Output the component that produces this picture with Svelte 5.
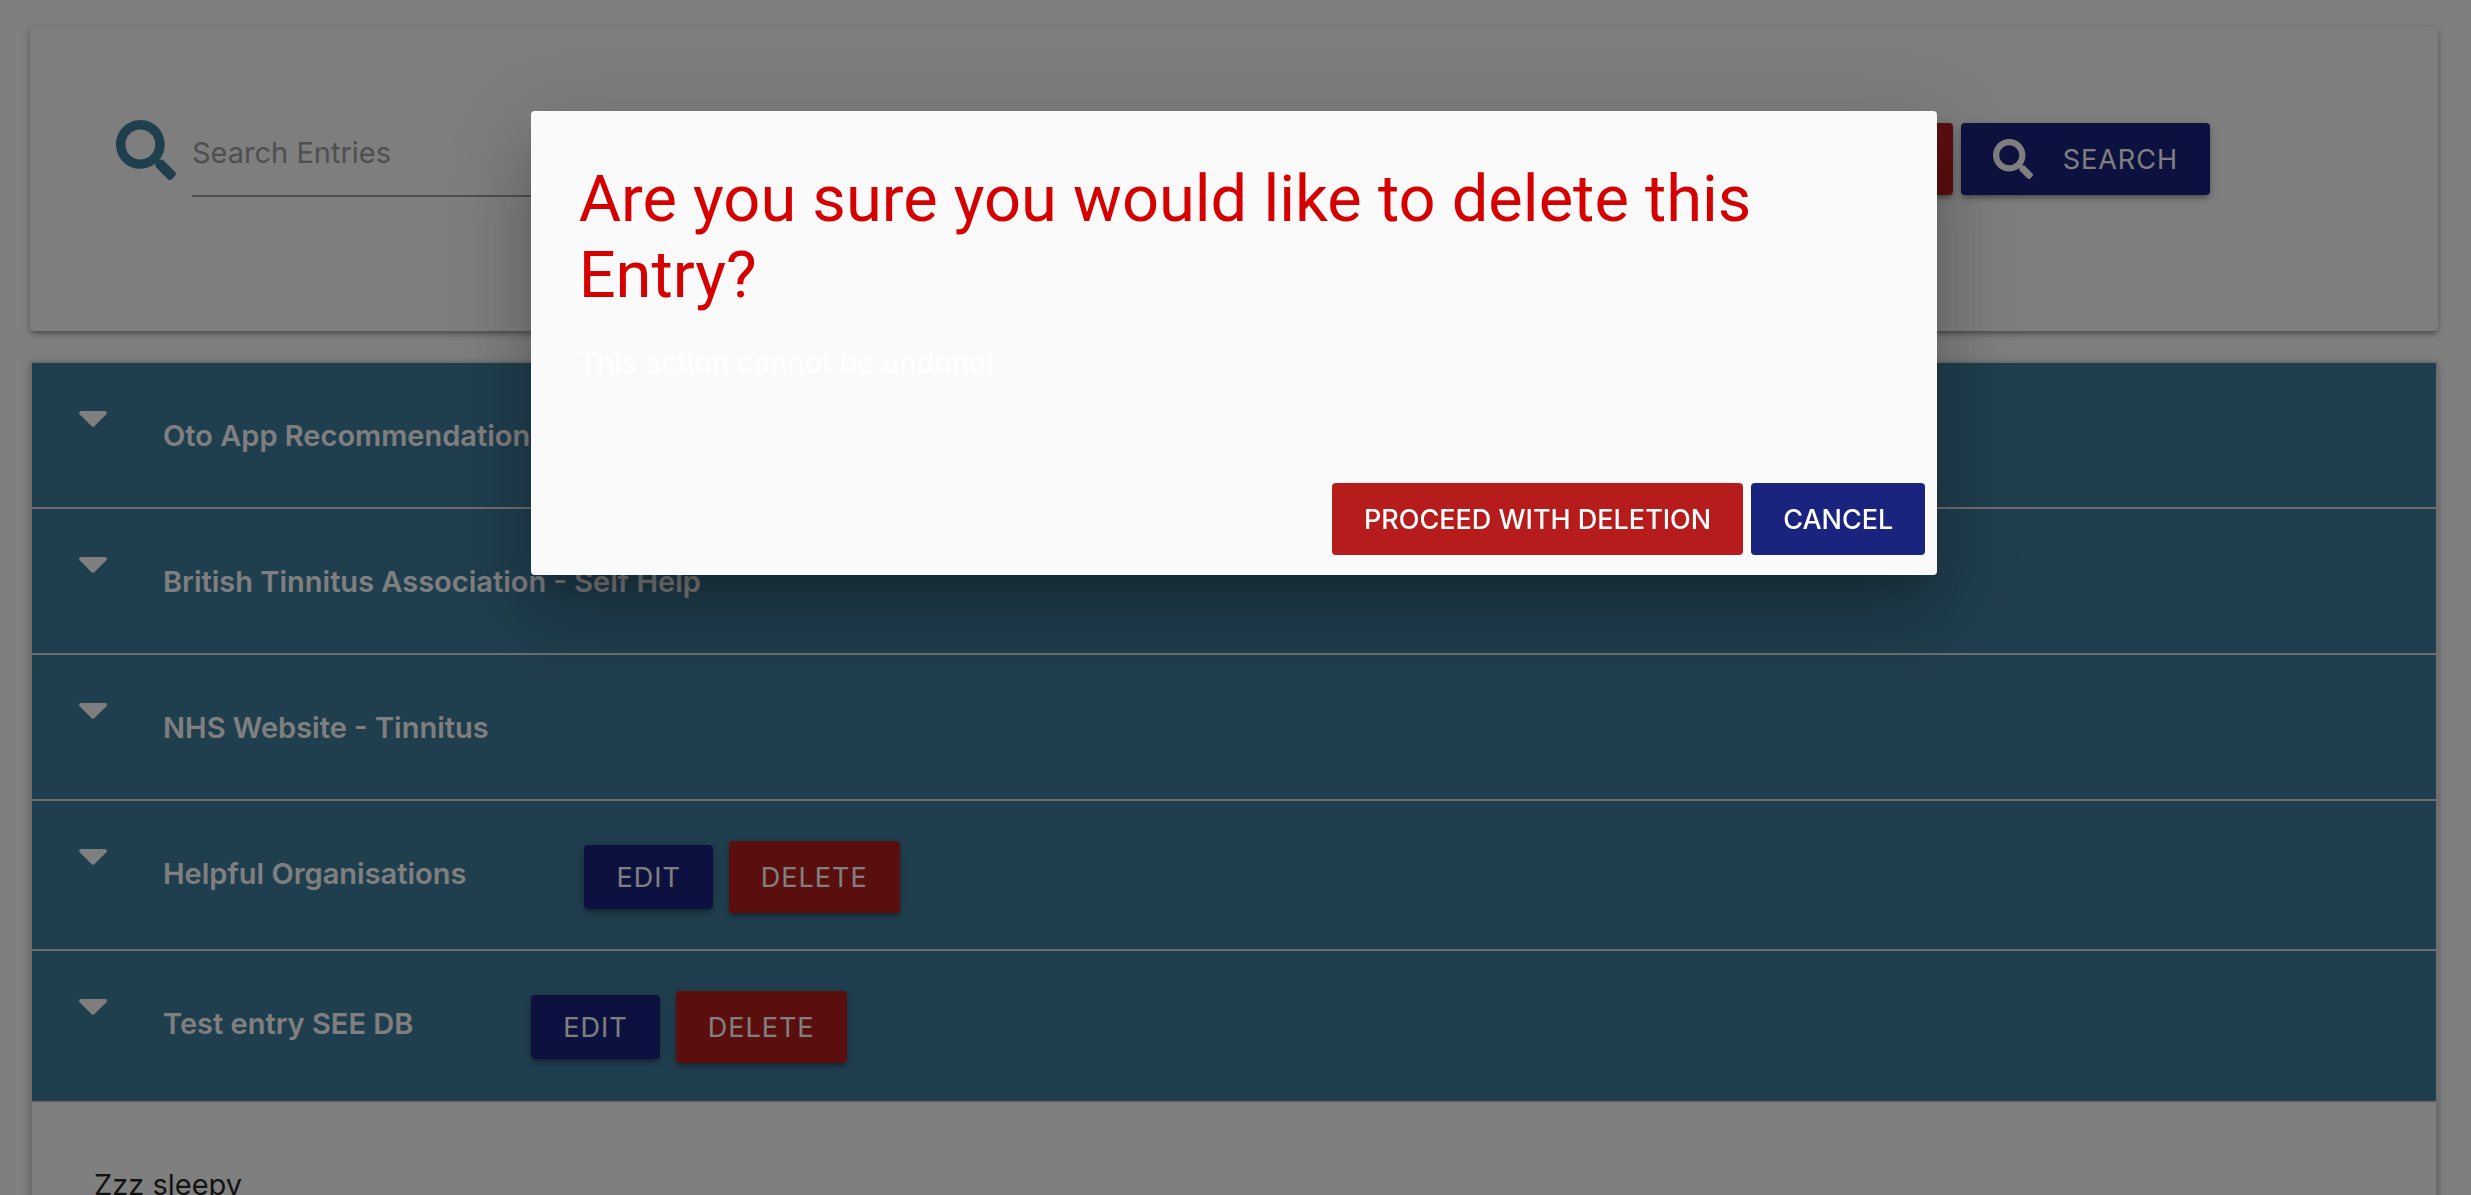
<script>
  const entries = [
    { title: 'Oto App Recommendation' },
    { title: 'British Tinnitus Association - Self Help' },
    { title: 'NHS Website - Tinnitus' },
    { title: 'Helpful Organisations', editable: true },
    { title: 'Test entry SEE DB', editable: true, body: 'Zzz sleepy' }
  ];
</script>

{#snippet magnifier()}
  <svg class="magnifier" viewBox="0 0 512 512" aria-hidden="true">
    <path
      fill="currentColor"
      d="M505 442.7L405.300 343c-4.500-4.500-10.600-7-17-7H372c27.600-35.300 44-79.700 44-128C416 93.100 322.900 0 208 0S0 93.100 0 208s93.100 208 208 208c48.300 0 92.700-16.400 128-44v16.300c0 6.400 2.500 12.500 7 17l99.700 99.700c9.400 9.400 24.600 9.400 33.900 0l28.300-28.300c9.400-9.400 9.400-24.600.1-34zM208 336c-70.700 0-128-57.200-128-128 0-70.700 57.200-128 128-128 70.700 0 128 57.200 128 128 0 70.700-57.200 128-128 128z"
    />
  </svg>
{/snippet}

<main>
  <form class="card">
    <label class="icon" for="search">{@render magnifier()}</label>
    <input id="search" type="text" placeholder="Search Entries" aria-label="Search Entries" />
    <div class="search-actions">
      <button class="btn red" type="reset">Clear</button>
      <button class="btn blue with-icon" type="submit">{@render magnifier()}<span>Search</span></button>
    </div>
  </form>

  <ul class="entries">
    {#each entries as entry}
      <li>
        <div class="header" class:open={entry.body}>
          <button class="toggle" type="button" aria-expanded={!!entry.body}>
            <svg class="caret" viewBox="10 192 300 169" aria-hidden="true">
              <path
                fill="currentColor"
                d="M31.3 192h257.3c17.8 0 26.7 21.5 14.1 34.1L174.1 354.8c-7.8 7.8-20.500 7.8-28.3 0L17.200 226.100C4.600 213.500 13.500 192 31.300 192z"
              />
            </svg>
            <span>{entry.title}</span>
          </button>
          {#if entry.editable}
            <div class="row-actions">
              <button class="btn blue edit" type="button">Edit</button>
              <button class="btn red" type="button">Delete</button>
            </div>
          {/if}
        </div>
        {#if entry.body}
          <div class="body">{entry.body}</div>
        {/if}
      </li>
    {/each}
  </ul>
</main>

<div class="overlay">
  <div class="modal" role="dialog" aria-modal="true" aria-labelledby="modal-title">
    <div class="content">
      <h4 id="modal-title">Are you sure you would like to delete this Entry?</h4>
      <p>This action cannot be undone!</p>
    </div>
    <div class="footer">
      <button class="btn red flat" type="button">Proceed with deletion</button>
      <button class="btn blue flat" type="button">Cancel</button>
    </div>
  </div>
</div>

<style>
  :global(body) {
    background: #fff;
    overflow: hidden;
    height: 100vh;
  }

  main,
  .overlay,
  button,
  input {
    font-family: Inter, 'Liberation Sans', sans-serif;
    font-size: 29px;
  }

  main {
    padding: 27px 33px 0 30px;
    color: rgba(0, 0, 0, 0.87);
  }

  .card,
  .entries {
    box-shadow:
      0 4px 4px 0 rgba(0, 0, 0, 0.14),
      0 6px 2px -4px rgba(0, 0, 0, 0.12),
      0 2px 10px 0 rgba(0, 0, 0, 0.2);
  }

  .card {
    box-sizing: border-box;
    display: flex;
    align-items: flex-start;
    min-height: 304px;
    padding: 80px 228px 80px 86px;
    background: #fcfcfc;
    border-radius: 4px;
  }

  .icon {
    display: flex;
    width: 60px;
    padding-top: 13px;
    color: #3f7c9c;
  }

  .magnifier {
    display: block;
    width: 100%;
  }

  input {
    box-sizing: border-box;
    flex: 1;
    min-width: 0;
    height: 90px;
    margin-left: 16px;
    padding: 2px 0 0;
    border: 0;
    border-bottom: 2px solid #9e9e9e;
    border-radius: 0;
    background: none;
    outline: none;
  }

  input::placeholder {
    color: #9e9e9e;
    opacity: 1;
  }

  .search-actions {
    display: flex;
    gap: 8px;
    margin-left: 60px;
    padding-top: 16px;
  }

  .btn {
    height: 72px;
    padding: 0 32px;
    border: 0;
    border-radius: 4px;
    color: #fff;
    font-size: 27px;
    letter-spacing: 1px;
    text-transform: uppercase;
    white-space: nowrap;
    box-shadow:
      0 4px 4px 0 rgba(0, 0, 0, 0.14),
      0 6px 2px -4px rgba(0, 0, 0, 0.12),
      0 2px 10px 0 rgba(0, 0, 0, 0.2);
  }

  .red {
    background: #b71c1c;
  }

  .blue {
    background: #1a237e;
  }

  .flat {
    box-shadow: none;
    letter-spacing: normal;
    font-weight: 500;
  }

  .with-icon {
    display: flex;
    align-items: center;
    gap: 30px;
  }

  .with-icon .magnifier {
    width: 40px;
  }

  .entries {
    margin: 30px 0 0;
    padding: 0;
    list-style: none;
    border: 2px solid #ddd;
    border-bottom: 0;
  }

  .header {
    display: flex;
    align-items: flex-start;
    min-height: 64px;
    padding: 40px 47px;
    background: #3f7c9c;
    border-bottom: 2px solid #ddd;
  }

  .toggle {
    display: flex;
    align-items: flex-start;
    gap: 56px;
    padding: 8px 0 0;
    border: 0;
    background: none;
    color: #fff;
    font-weight: 600;
    line-height: 50px;
    white-space: nowrap;
  }

  .caret {
    width: 28px;
    height: 16px;
  }

  .row-actions {
    display: flex;
    align-items: center;
    gap: 16px;
    margin-left: 118px;
  }

  .header:has(.row-actions) {
    padding-bottom: 36px;
  }

  .header.open {
    padding-bottom: 38px;
  }

  .edit {
    height: 64px;
  }

  .body {
    padding: 60px 62px;
    line-height: 44px;
  }

  .overlay {
    position: fixed;
    inset: 0;
    display: flex;
    justify-content: center;
    align-items: flex-start;
    padding: 111px 3px 0 0;
    background: rgba(0, 0, 0, 0.5);
  }

  .modal {
    width: 57%;
    background: #fafafa;
    border-radius: 4px;
    box-shadow:
      0 48px 76px 6px rgba(0, 0, 0, 0.14),
      0 18px 92px 16px rgba(0, 0, 0, 0.12),
      0 22px 30px -14px rgba(0, 0, 0, 0.2);
  }

  .content {
    padding: 50px 48px 90px;
  }

  h4 {
    margin: 0 0 28px;
    color: #d50000;
    font-family: Roboto, Inter, sans-serif;
    font-size: 65px;
    font-weight: 400;
    line-height: 76px;
  }

  p {
    margin: 0;
    color: #fff;
    line-height: 44px;
  }

  .footer {
    display: flex;
    justify-content: flex-end;
    gap: 8px;
    padding: 8px 12px 20px;
  }
</style>
